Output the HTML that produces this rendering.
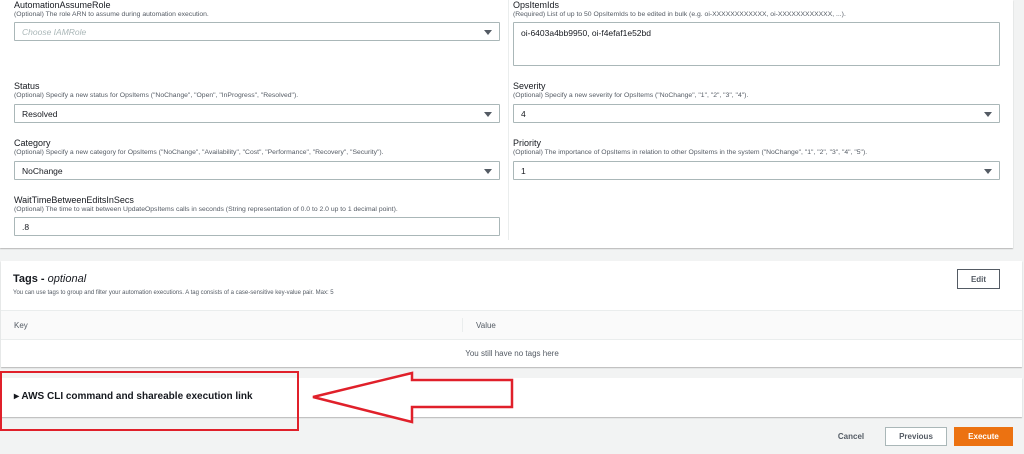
<!DOCTYPE html>
<html><head><meta charset="utf-8"><style>
*{box-sizing:border-box;margin:0;padding:0}
body{width:1024px;height:454px;background:#f2f3f3;font-family:"Liberation Sans",sans-serif;color:#16191f;position:relative;overflow:hidden}
.a{position:absolute}
.panel{background:#fff;box-shadow:0 1px 1px rgba(0,0,0,.25)}
.lbl{font-size:9px;color:#16191f}
.desc{font-size:6.8px;color:#545b64}
.box{border:1px solid #aab7b8;background:#fff;font-size:8.5px;padding:0 7px;display:flex;align-items:center;border-radius:1px}
.arr{position:absolute;right:7px;top:50%;margin-top:-2px;width:0;height:0;border-left:4px solid transparent;border-right:4px solid transparent;border-top:5px solid #545b64}
.btn{position:absolute;font-size:8px;font-weight:bold;display:flex;align-items:center;justify-content:center}
</style></head><body>
<div class="a panel" style="left:0;top:0;width:1013px;height:248px"></div>
<div class="a" style="left:508px;top:0;width:1px;height:240px;background:#eaeded"></div>

<div class="a lbl" style="left:14px;top:0px">AutomationAssumeRole</div>
<div class="a desc" style="left:14px;top:11px">(Optional) The role ARN to assume during automation execution.</div>
<div class="a box" style="left:14px;top:22px;width:486px;height:19px;color:#aab7b8;font-style:italic">Choose IAMRole<span class="arr"></span></div>

<div class="a lbl" style="left:14px;top:81px">Status</div>
<div class="a desc" style="left:14px;top:92px">(Optional) Specify a new status for OpsItems ("NoChange", "Open", "InProgress", "Resolved").</div>
<div class="a box" style="left:14px;top:104px;width:486px;height:19px">Resolved<span class="arr"></span></div>

<div class="a lbl" style="left:14px;top:138px">Category</div>
<div class="a desc" style="left:14px;top:149px">(Optional) Specify a new category for OpsItems ("NoChange", "Availability", "Cost", "Performance", "Recovery", "Security").</div>
<div class="a box" style="left:14px;top:161px;width:486px;height:19px">NoChange<span class="arr"></span></div>

<div class="a lbl" style="left:14px;top:195px">WaitTimeBetweenEditsInSecs</div>
<div class="a desc" style="left:14px;top:206px">(Optional) The time to wait between UpdateOpsItems calls in seconds (String representation of 0.0 to 2.0 up to 1 decimal point).</div>
<div class="a box" style="left:14px;top:217px;width:486px;height:19px">.8</div>

<div class="a lbl" style="left:513px;top:0px">OpsItemIds</div>
<div class="a desc" style="left:513px;top:11px">(Required) List of up to 50 OpsItemIds to be edited in bulk (e.g. oi-XXXXXXXXXXXX, oi-XXXXXXXXXXXX, ...).</div>
<div class="a box" style="left:513px;top:22px;width:487px;height:44px;align-items:flex-start;padding-top:5px">oi-6403a4bb9950, oi-f4efaf1e52bd</div>

<div class="a lbl" style="left:513px;top:81px">Severity</div>
<div class="a desc" style="left:513px;top:92px">(Optional) Specify a new severity for OpsItems ("NoChange", "1", "2", "3", "4").</div>
<div class="a box" style="left:513px;top:104px;width:487px;height:19px">4<span class="arr"></span></div>

<div class="a lbl" style="left:513px;top:138px">Priority</div>
<div class="a desc" style="left:513px;top:149px">(Optional) The importance of OpsItems in relation to other OpsItems in the system ("NoChange", "1", "2", "3", "4", "5").</div>
<div class="a box" style="left:513px;top:161px;width:487px;height:19px">1<span class="arr"></span></div>

<div class="a panel" style="left:1px;top:261px;width:1021px;height:106px"></div>
<div class="a" style="left:13px;top:273px;font-size:11px;font-weight:bold">Tags - <i style="font-weight:normal">optional</i></div>
<div class="a desc" style="left:13px;top:290px;font-size:6px">You can use tags to group and filter your automation executions. A tag consists of a case-sensitive key-value pair. Max: 5</div>
<div class="btn" style="left:957px;top:269px;width:43px;height:20px;border:1px solid #545b64;background:#fff;color:#545b64">Edit</div>
<div class="a" style="left:1px;top:310px;width:1021px;height:30px;background:#fafafa;border-top:1px solid #eaeded;border-bottom:1px solid #eaeded"></div>
<div class="a" style="left:462px;top:318px;width:1px;height:14px;background:#eaeded"></div>
<div class="a" style="left:14px;top:321px;font-size:8px;color:#545b64">Key</div>
<div class="a" style="left:476px;top:321px;font-size:8px;color:#545b64">Value</div>
<div class="a" style="left:0;width:1024px;top:349px;font-size:8px;color:#545b64;text-align:center">You still have no tags here</div>

<div class="a panel" style="left:1px;top:378px;width:1021px;height:39px"></div>
<div class="a" style="left:14px;top:391px;font-size:10px;font-weight:bold">▸ AWS CLI command and shareable execution link</div>

<div class="a" style="left:0;top:371px;width:299px;height:60px;border:2px solid #e0202a"></div>
<svg class="a" style="left:0;top:0" width="1024" height="454"><polygon points="313,397 412,373 412,380 512,380 512,407 412,407 412,422" fill="#fff" stroke="#e0202a" stroke-width="2.5"/></svg>

<div class="btn" style="left:832px;top:427px;width:38px;height:18px;color:#545b64">Cancel</div>
<div class="btn" style="left:885px;top:427px;width:62px;height:19px;border:1px solid #aab7b8;background:#fff;color:#545b64">Previous</div>
<div class="btn" style="left:954px;top:427px;width:59px;height:19px;background:#ec7211;color:#fff">Execute</div>
</body></html>
